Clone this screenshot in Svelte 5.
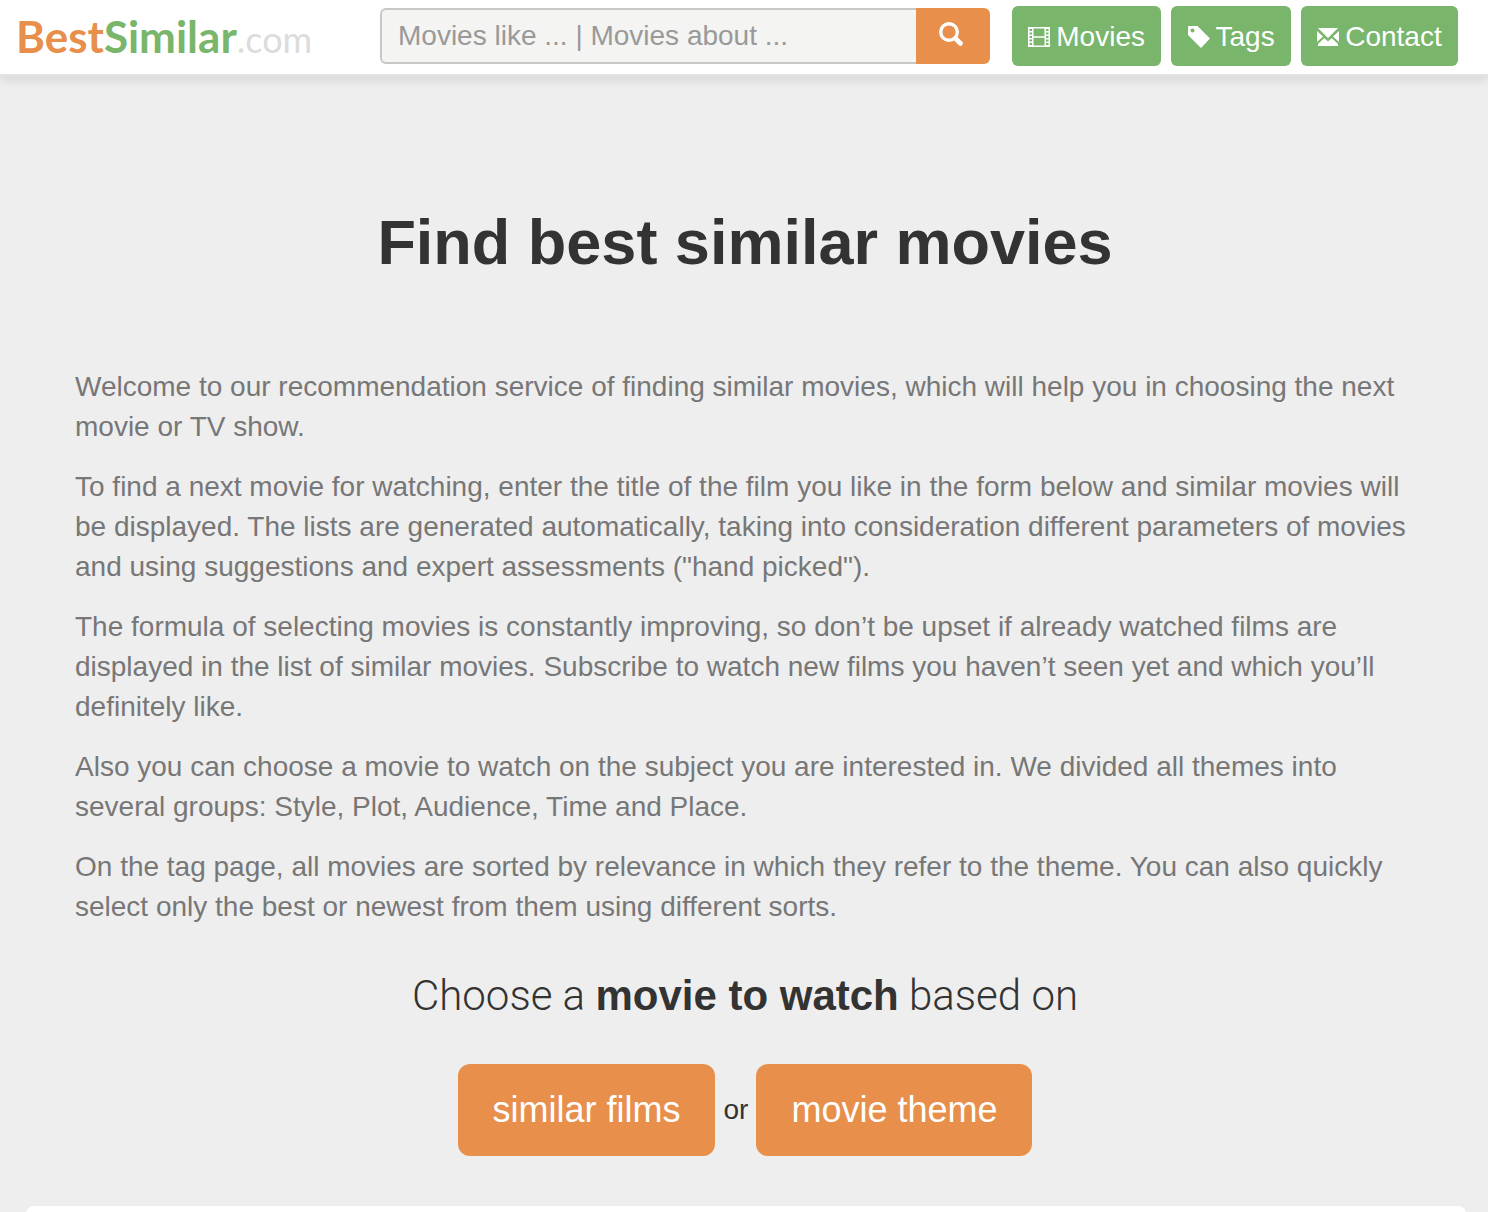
<script>
  const paragraphs = [
    'Welcome to our recommendation service of finding similar movies, which will help you in choosing the next movie or TV show.',
    'To find a next movie for watching, enter the title of the film you like in the form below and similar movies will be displayed. The lists are generated automatically, taking into consideration different parameters of movies and using suggestions and expert assessments ("hand picked").',
    'The formula of selecting movies is constantly improving, so don’t be upset if already watched films are displayed in the list of similar movies. Subscribe to watch new films you haven’t seen yet and which you’ll definitely like.',
    'Also you can choose a movie to watch on the subject you are interested in. We divided all themes into several groups: Style, Plot, Audience, Time and Place.',
    'On the tag page, all movies are sorted by relevance in which they refer to the theme. You can also quickly select only the best or newest from them using different sorts.'
  ];
  let query = $state('');
</script>

<header class="topbar">
  <a class="logo" href="/" aria-label="BestSimilar.com"><span class="best">Best</span><span class="similar">Similar</span><span class="com">.com</span></a>

  <form class="search" role="search" onsubmit={(e) => e.preventDefault()}>
    <input type="text" aria-label="Search movies" placeholder="Movies like ... | Movies about ..." bind:value={query} />
    <button type="submit" aria-label="Search">
      <svg width="24" height="24" viewBox="0 0 24 24" fill="none" stroke="#fff" aria-hidden="true">
        <circle cx="10" cy="10" r="8.300" stroke-width="3.400" />
        <path d="M16.500 16.500l5 5" stroke-width="4.600" stroke-linecap="round" />
      </svg>
    </button>
  </form>

  <nav>
    <a href="/movies">
      <svg width="22" height="20" viewBox="0 0 22 20" aria-hidden="true">
        <path fill="#fff" fill-rule="evenodd" d="M0 0H22V20H0ZM5.500 1.500V9.300H16.500V1.500ZM5.500 10.700V18.500H16.500V10.700ZM1.500 2V4H4V2ZM1.500 5.500V7.500H4V5.500ZM1.500 9V11H4V9ZM1.500 12.500V14.500H4V12.500ZM1.500 16V18H4V16ZM18 2V4H20.500V2ZM18 5.500V7.500H20.500V5.500ZM18 9V11H20.500V9ZM18 12.500V14.500H20.500V12.500ZM18 16V18H20.500V16Z" />
      </svg>
      <span>Movies</span>
    </a>
    <a href="/tags">
      <svg width="22" height="22" viewBox="0 0 22 22" aria-hidden="true">
        <path fill="#fff" fill-rule="evenodd" d="M0 1Q0 0 1 0H9.500L22 12.500L13 22L0 9ZM4.500 2.500A2 2 0 1 0 4.500 6.500A2 2 0 1 0 4.500 2.500Z" />
      </svg>
      <span>Tags</span>
    </a>
    <a href="/contact">
      <svg width="22" height="18" viewBox="0 0 22 18" aria-hidden="true">
        <path fill="#fff" d="M1 0H21L11 10ZM0 3L6 8.500L0 14ZM22 3L16 8.500L22 14ZM7.300 10L11 13.500L14.700 10L21 16V18H1V16Z" />
      </svg>
      <span>Contact</span>
    </a>
  </nav>
</header>

<main>
  <section class="intro">
    <h1>Find best similar movies</h1>
    <div class="copy">
      {#each paragraphs as text}
        <p>{text}</p>
      {/each}
    </div>
    <h2>Choose a <strong>movie to watch</strong> based on</h2>
    <div class="choices">
      <a href="/movies">similar films</a>
      <span>or</span>
      <a href="/tags">movie theme</a>
    </div>
  </section>
  <section class="panel" aria-label="Results"></section>
</main>

<style>
  :global(body) {
    background: #eee;
    color: #333;
    font-family: 'Liberation Sans', Arial, sans-serif;
    font-size: 28px;
    line-height: 40px;
  }

  a {
    text-decoration: none;
  }

  .topbar {
    position: relative;
    display: flex;
    align-items: center;
    padding: 6px 30px 8px 16px;
    background: #fff;
    border-bottom: 2px solid #e3e3e3;
    box-shadow: 0 4px 10px rgba(0, 0, 0, 0.1);
  }

  .logo {
    flex: none;
    width: 294px;
    height: 60px;
    font-family: Lato, sans-serif;
    font-size: 44px;
    line-height: 60px;
    white-space: nowrap;
  }

  .best,
  .similar {
    font-weight: 700;
    color: #e78f4b;
  }

  .similar {
    color: #79b56a;
  }

  .com {
    font-size: 36px;
    color: #dcdcdc;
  }

  .search {
    display: flex;
    flex: 1;
    min-width: 0;
    height: 56px;
    margin: 0 22px 0 70px;
  }

  .search input {
    flex: 1;
    min-width: 0;
    box-sizing: border-box;
    padding: 0 16px;
    border: 2px solid #c8c8c8;
    border-right: 0;
    border-radius: 6px 0 0 6px;
    background: #f4f4f2;
    color: #333;
    font: inherit;
  }

  .search input::placeholder {
    color: #999;
    opacity: 1;
  }

  .search button {
    display: flex;
    align-items: center;
    justify-content: center;
    width: 74px;
    padding: 0 4px 4px 0;
    border: 0;
    border-radius: 0 6px 6px 0;
    background: #e78f4b;
  }

  nav {
    display: flex;
    flex: 0 0 446px;
    gap: 10px;
  }

  nav a {
    display: flex;
    flex: 1 0 auto;
    align-items: center;
    justify-content: center;
    gap: 6px;
    box-sizing: border-box;
    height: 60px;
    padding: 2px 15px 0;
    border-radius: 6px;
    background: #79b56a;
    color: #fff;
  }

  main {
    padding: 0 22px 0 26px;
  }

  .intro {
    padding: 127px 51px 50px 49px;
  }

  h1 {
    margin: 0 0 86px;
    font-size: 63px;
    line-height: 78px;
    text-align: center;
  }

  p {
    margin: 0 0 20px;
    color: #777;
  }

  h2 {
    margin: 45px 0 44px;
    font-family: Roboto, sans-serif;
    font-size: 42px;
    font-weight: 300;
    line-height: 48px;
    text-align: center;
  }

  h2 strong {
    font-family: 'Liberation Sans', Arial, sans-serif;
    font-weight: 700;
  }

  .choices {
    display: flex;
    align-items: center;
    justify-content: center;
    gap: 8px;
  }

  .choices a {
    padding: 22px 35px;
    border-radius: 12px;
    background: #e78f4b;
    color: #fff;
    font-size: 36px;
    line-height: 48px;
  }

  .panel {
    min-height: 60px;
    border-radius: 8px 8px 0 0;
    background: #fff;
  }
</style>
